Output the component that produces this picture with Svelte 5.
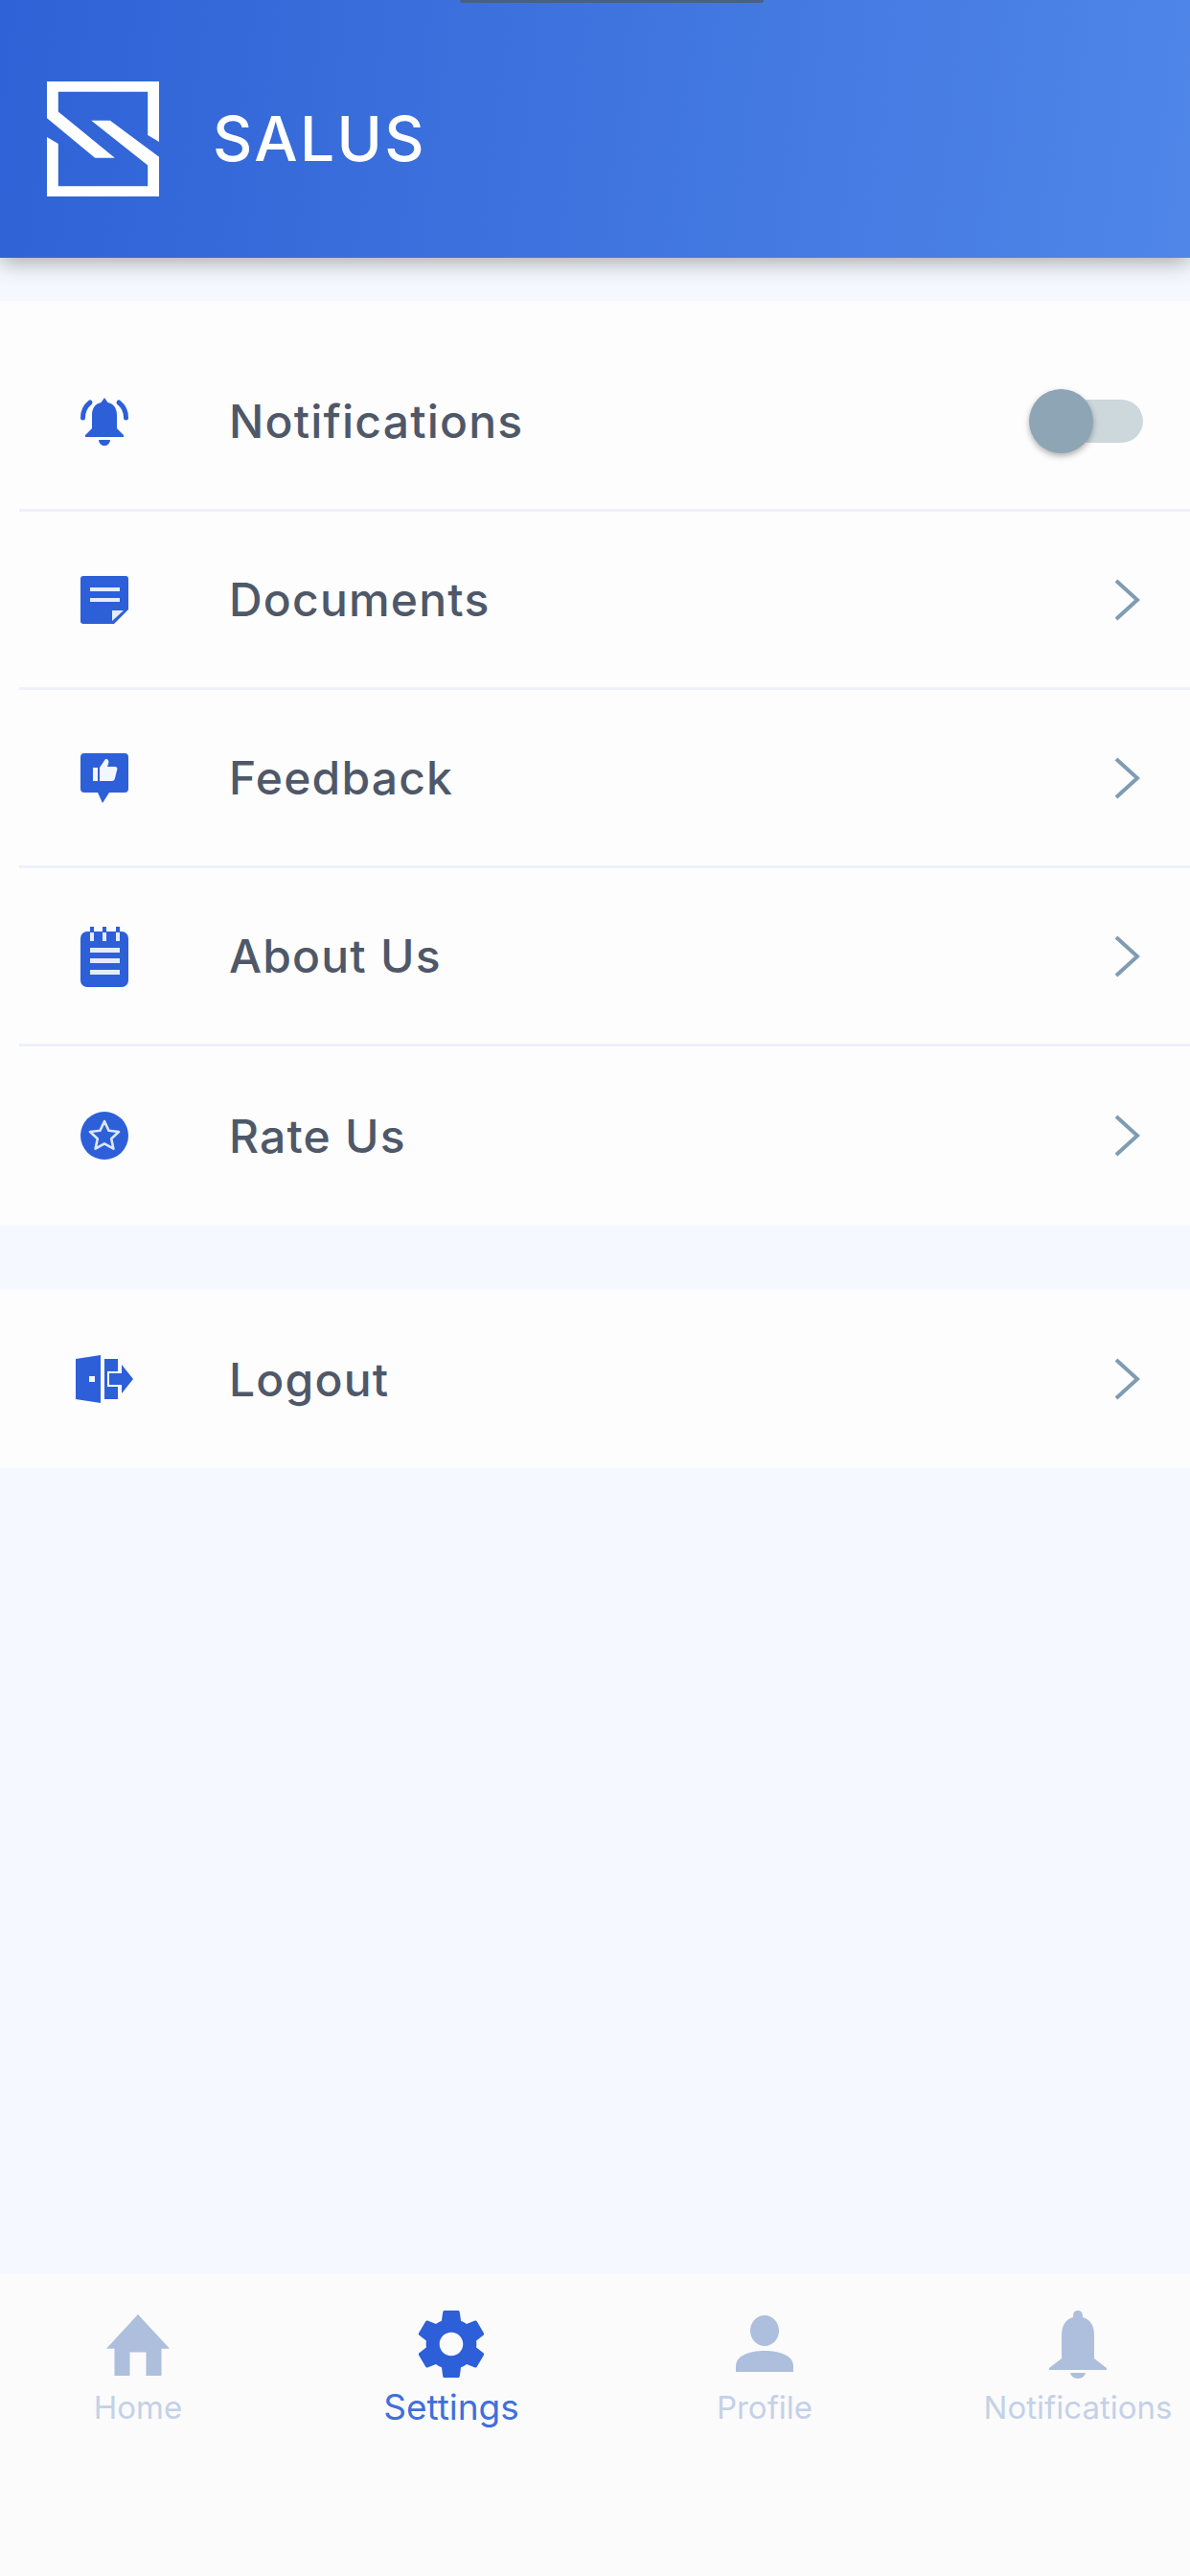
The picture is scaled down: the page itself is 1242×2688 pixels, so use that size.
<script>
  const rows = [
    { label: 'Notifications', icon: 'bell', toggle: true },
    { label: 'Documents', icon: 'doc' },
    { label: 'Feedback', icon: 'feedback' },
    { label: 'About Us', icon: 'notes' },
    { label: 'Rate Us', icon: 'star' }
  ];
  const tabs = [
    { label: 'Home', icon: 'home' },
    { label: 'Settings', icon: 'gear', active: true },
    { label: 'Profile', icon: 'user' },
    { label: 'Notifications', icon: 'tbell' }
  ];
</script>

{#snippet rowIcon(name)}
  {#if name === 'bell'}
    <svg class="ricon" viewBox="0 0 50 52" width="50" height="52">
      <path fill="#2d5fd8" d="M25 1l3.500 5c7 1.500 9.500 7 9.500 13v14l7 7v2H5v-2l7-7V19c0-6 2.500-11.500 9.500-13z"/>
      <path fill="#2d5fd8" d="M19 45h12c-.5 4-3 6-6 6s-5.500-2-6-6z"/>
      <path fill="none" stroke="#2d5fd8" stroke-width="5" stroke-linecap="round" d="M10 6C5 10 2.500 16 2.500 22M40 6c5 4 7.500 10 7.500 16"/>
    </svg>
  {:else if name === 'doc'}
    <svg class="ricon" viewBox="0 0 50 50" width="50" height="50">
      <path fill="#2d5fd8" d="M3 0h44a3 3 0 0 1 3 3v32L35 50H3a3 3 0 0 1-3-3V3a3 3 0 0 1 3-3z"/>
      <path fill="#e4ecfd" d="M10 12h31v4H10zM10 23h31v4H10zM33 36h12L33 47z"/>
    </svg>
  {:else if name === 'feedback'}
    <svg class="ricon" viewBox="0 0 50 52" width="50" height="52">
      <path fill="#2d5fd8" d="M4 0h42a4 4 0 0 1 4 4v33a4 4 0 0 1-4 4H30l-7 11-5-11H4a4 4 0 0 1-4-4V4a4 4 0 0 1 4-4z"/>
      <path fill="#f2f6ff" d="M13 15h5v14h-5zM20 15l6-9c3 0 4 2 3 5l-1 3h8c2 0 3 2 2 4l-2 8c-.5 2-1.500 3-3 3H20z"/>
    </svg>
  {:else if name === 'notes'}
    <svg class="ricon" viewBox="0 0 50 64" width="50" height="64">
      <path fill="#2d5fd8" d="M7 6h36a7 7 0 0 1 7 7v44a7 7 0 0 1-7 7H7a7 7 0 0 1-7-7V13a7 7 0 0 1 7-7z"/>
      <path fill="#e4ecfd" d="M10 23h31v5H10zM10 34h31v5H10zM10 46h31v5H10zM10 6h4v10h-4zM23 6h4v10h-4zM37 6h4v10h-4z"/>
      <path fill="#2d5fd8" d="M10 1h4v6h-4zM23 1h4v6h-4zM37 1h4v6h-4z"/>
    </svg>
  {:else if name === 'star'}
    <svg class="ricon" viewBox="0 0 50 50" width="50" height="50">
      <circle cx="25" cy="25" r="25" fill="#2d5fd8"/>
      <path fill="none" stroke="#dce7fd" stroke-width="2.600" stroke-linejoin="round" d="M25 10l4.500 9.800 10.500 1.200-7.800 7.200 2.200 10.500-9.400-5.400-9.400 5.400 2.200-10.500-7.800-7.200 10.500-1.200z"/>
    </svg>
  {:else}
    <svg class="ricon" viewBox="0 0 60 50" width="60" height="50">
      <path fill="#2d5fd8" d="M0 4l26-4v50L0 46z"/>
      <path fill="#2d5fd8" d="M30 4h14v13H33v16h11v13H30z"/>
      <path fill="#2d5fd8" d="M35 19h13v-9l12 15-12 15v-9H35z"/>
      <rect x="14" y="22" width="6" height="6" fill="#f2f6ff"/>
    </svg>
  {/if}
{/snippet}

{#snippet tabIcon(name)}
  {#if name === 'home'}
    <svg class="ticon" viewBox="0 0 70 70" width="70" height="66">
      <path fill="#adbfdc" d="M35 2L0 40h9v30h17V44h18v26h17V40h9z"/>
    </svg>
  {:else if name === 'gear'}
    <svg class="ticon" viewBox="0 0 24 24" width="72" height="72">
      <path fill="#2d5fd8" transform="translate(12 12) scale(1.170) translate(-12 -12)" d="M19.430 12.980c.04-.32.07-.64.07-.98s-.03-.66-.07-.98l2.110-1.650c.19-.15.24-.42.120-.64l-2-3.460c-.12-.22-.39-.3-.61-.22l-2.490 1c-.52-.4-1.080-.73-1.690-.98l-.38-2.650C14.460 2.180 14.250 2 14 2h-4c-.25 0-.46.18-.49.42l-.38 2.650c-.61.25-1.170.59-1.690.98l-2.490-1c-.23-.09-.49 0-.61.22l-2 3.460c-.13.22-.07.49.12.64l2.110 1.650c-.04.32-.07.65-.07.98s.03.66.07.98l-2.110 1.650c-.19.15-.24.42-.12.64l2 3.460c.12.22.39.3.61.22l2.490-1c.52.4 1.080.73 1.690.98l.38 2.650c.03.24.24.42.49.42h4c.25 0 .46-.18.49-.42l.38-2.650c.61-.25 1.170-.59 1.690-.98l2.490 1c.23.09.49 0 .61-.22l2-3.460c.12-.22.07-.49-.12-.64l-2.110-1.650zM12 15.500c-1.930 0-3.500-1.570-3.500-3.500s1.570-3.500 3.500-3.500 3.500 1.570 3.500 3.500-1.570 3.500-3.500 3.500z"/>
    </svg>
  {:else if name === 'user'}
    <svg class="ticon" viewBox="0 0 70 70" width="70" height="70">
      <ellipse cx="35" cy="21" rx="15" ry="16" fill="#adbfdc"/>
      <path fill="#adbfdc" d="M5 64v-6c0-11 14-16 30-16s30 5 30 16v6z"/>
    </svg>
  {:else}
    <svg class="ticon" viewBox="0 0 70 72" width="70" height="72">
      <path fill="#adbfdc" d="M35 1c3 0 5 2 5 6v1c8 2 12 9 12 19v24l13 10v2H5v-2l13-10V27c0-10 4-17 12-19V7c0-4 2-6 5-6z"/>
      <path fill="#adbfdc" d="M27 66h16c-.5 3-4 6-8 6s-7.500-3-8-6z"/>
    </svg>
  {/if}
{/snippet}

<div class="page">
  <header class="header">
    <div class="notch"></div>
    <svg class="logo" viewBox="0 0 120 122" width="120" height="120">
      <path fill="#fff" d="M0 0H119V64L107 57V11H12V32L72 81H51L0 39Z"/>
      <path fill="#fff" d="M47 41.500H67L119 80V122H0V59L12 66V111H107V89Z"/>
    </svg>
    <span class="brand">SALUS</span>
  </header>

  <section class="card first">
    {#each rows as row, i}
      <div class="row" class:divided={i < rows.length - 1}>
        <div class="icon-box">{@render rowIcon(row.icon)}</div>
        <span class="label">{row.label}</span>
        {#if row.toggle}
          <div class="toggle"><div class="knob"></div></div>
        {:else}
          <svg class="chev" viewBox="0 0 28 44" width="28" height="44"><path d="M3 2l22 20L3 42" fill="none" stroke="#7f9cb2" stroke-width="4"/></svg>
        {/if}
      </div>
    {/each}
  </section>

  <section class="card second">
    <div class="row">
      <div class="icon-box">{@render rowIcon('logout')}</div>
      <span class="label">Logout</span>
      <svg class="chev" viewBox="0 0 28 44" width="28" height="44"><path d="M3 2l22 20L3 42" fill="none" stroke="#7f9cb2" stroke-width="4"/></svg>
    </div>
  </section>

  <nav class="tabs">
    {#each tabs as tab}
      <div class="tab" class:active={tab.active}>
        <div class="tab-icon">{@render tabIcon(tab.icon)}</div>
        <span class="tab-label">{tab.label}</span>
      </div>
    {/each}
  </nav>
</div>

<style>
  :global(body) { margin: 0; background: #f5f8ff; }
  .page {
    width: 1242px; height: 2688px; display: flex; flex-direction: column;
    background: #f5f8ff; font-family: Inter, "Noto Sans", sans-serif; overflow: hidden;
  }
  .header {
    position: relative; flex: none; height: 269px; box-sizing: border-box;
    display: flex; align-items: center; gap: 54px; padding: 20px 0 0 48px;
    background: linear-gradient(97deg, #2f62d6 0%, #4f86e8 100%);
    box-shadow: 0 4px 22px rgba(60, 60, 60, 0.45);
  }
  .notch {
    position: absolute; top: 0; left: 480px; width: 317px; height: 3px;
    background: #4a5f87; border-radius: 0 0 3px 3px;
  }
  .brand { color: #fff; font-size: 64px; font-weight: 500; letter-spacing: 2.300px; }
  .card { background: #fdfdfe; }
  .card.first { margin-top: 45px; padding-top: 34px; padding-bottom: 1px; }
  .card.second { margin-top: 67px; }
  .row {
    height: 186px; box-sizing: border-box; display: flex; align-items: center;
    margin-left: 20px; padding-right: 52px; padding-left: 59px; position: relative;
  }
  .row.divided { border-bottom: 3px solid #eef1fb; }
  .icon-box { width: 60px; margin-right: 100px; display: flex; justify-content: center; flex: none; }
  .ricon { display: block; }
  .label { flex: 1; font-size: 48px; font-weight: 450; color: #4f5868; letter-spacing: 1.200px; }
  .chev { flex: none; }
  .toggle {
    position: relative; width: 107px; height: 45px; background: #cdd8dd; border-radius: 23px; flex: none;
    margin-right: -3px;
  }
  .knob {
    position: absolute; left: -12px; top: -11px; width: 67px; height: 67px; border-radius: 50%;
    background: #8ea5b5; box-shadow: 0 3px 6px rgba(0, 0, 0, 0.3);
  }
  .tabs {
    margin-top: auto; height: 315px; box-sizing: border-box; background: #fbfbfc;
    display: grid; grid-template-columns: repeat(4, 1fr); column-gap: 93px; padding: 35px 0 0 27px;
  }
  .tab { display: flex; flex-direction: column; align-items: center; }
  .tab-icon { height: 76px; display: flex; align-items: center; justify-content: center; }
  .ticon { display: block; }
  .tab-label { margin-top: 8px; font-size: 33px; line-height: 40px; color: #c4d1e6; white-space: nowrap; }
  .tab.active .tab-label { color: #3f6fdb; font-size: 37px; }
</style>
